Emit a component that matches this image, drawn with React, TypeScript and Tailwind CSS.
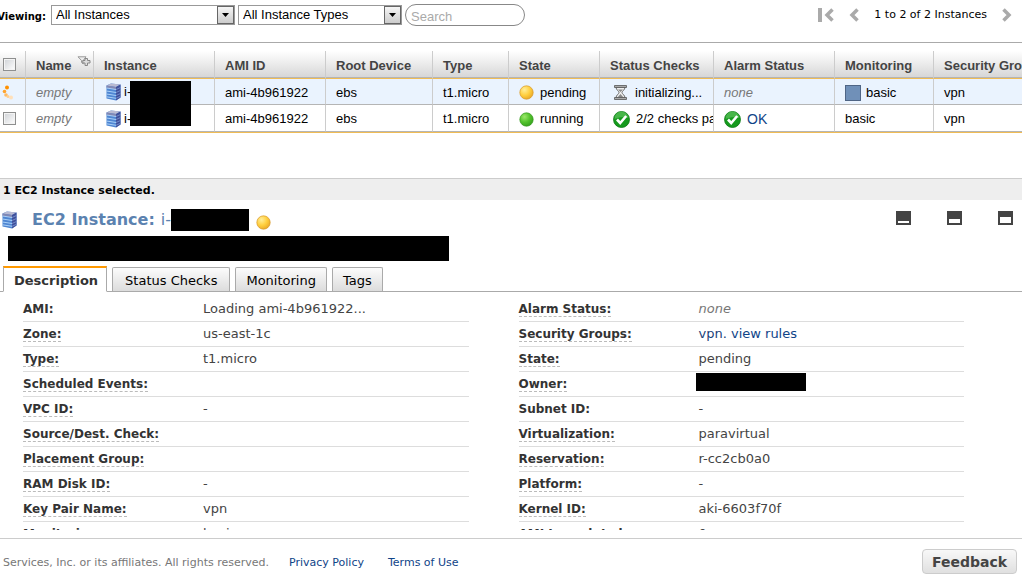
import type { ReactNode } from "react";

const columns = [
  { label: "Name", width: "w-[68px]" },
  { label: "Instance", width: "w-[121px]" },
  { label: "AMI ID", width: "w-[111px]" },
  { label: "Root Device", width: "w-[107px]" },
  { label: "Type", width: "w-[76px]" },
  { label: "State", width: "w-[91px]" },
  { label: "Status Checks", width: "w-[114px]" },
  { label: "Alarm Status", width: "w-[121px]" },
  { label: "Monitoring", width: "w-[99px]" },
  { label: "Security Groups", width: "" },
];

type Detail = { label: string; value?: ReactNode; hint?: boolean };

const leftDetails: Detail[] = [
  { label: "AMI:", value: "Loading ami-4b961922..." },
  { label: "Zone:", value: "us-east-1c", hint: true },
  { label: "Type:", value: "t1.micro", hint: true },
  { label: "Scheduled Events:", hint: true },
  { label: "VPC ID:", value: "-", hint: true },
  { label: "Source/Dest. Check:", hint: true },
  { label: "Placement Group:", hint: true },
  { label: "RAM Disk ID:", value: "-", hint: true },
  { label: "Key Pair Name:", value: "vpn", hint: true },
  { label: "Monitoring:", value: "basic", hint: true },
];

const rightDetails: Detail[] = [
  { label: "Alarm Status:", value: <i className="text-[#777]">none</i>, hint: true },
  {
    label: "Security Groups:",
    value: (
      <>
        <a href="#vpn" className="text-[#1b3f7a]">vpn.</a>{" "}
        <a href="#rules" className="text-[#0f4488]">view rules</a>
      </>
    ),
    hint: true,
  },
  { label: "State:", value: "pending", hint: true },
  { label: "Owner:", value: <span className="-mt-[3px] -ml-[3px] block h-[18px] w-[110px] bg-black" />, hint: true },
  { label: "Subnet ID:", value: "-" },
  { label: "Virtualization:", value: "paravirtual", hint: true },
  { label: "Reservation:", value: "r-cc2cb0a0", hint: true },
  { label: "Platform:", value: "-", hint: true },
  { label: "Kernel ID:", value: "aki-6603f70f", hint: true },
  { label: "AMI Launch Index:", value: "0", hint: true },
];

function ServerIcon() {
  return (
    <svg width="15" height="18" viewBox="0 0 15 18" className="shrink-0">
      <path d="M.5 2.500 5 .5l9.500 1v13L10 17.500.5 15.500z" fill="#4f86d2" />
      <path d="M.5 2.500 5 .5l9.500 1-4.500 2.500z" fill="#b9bad2" />
      <path d="m10 4 4.500-2.500v13L10 17.500z" fill="#3f4f9a" />
      <path d="M.5 2.500 10 4v2.500L.5 5z" fill="#8288b4" />
      <path d="M.5 5 10 6.500M.5 8 10 9.500M.5 11 10 12.500M.5 13.800 10 15.300" stroke="#a9d0f7" />
      <path d="m10 6.500 4.500-2M10 9.500l4.500-2M10 12.500l4.500-2M10 15.300l4.500-2" stroke="#7f9bd6" strokeWidth=".8" />
    </svg>
  );
}

function StateDot({ color }: { color: "yellow" | "green" }) {
  const yellow = color === "yellow";
  return (
    <svg width="15" height="15" viewBox="0 0 15 15" className="shrink-0">
      <defs>
        <radialGradient id={"dot-" + color} cx=".35" cy=".3" r=".75">
          <stop offset="0" stopColor={yellow ? "#ffee9a" : "#9be86a"} />
          <stop offset=".55" stopColor={yellow ? "#ffcf3f" : "#52c22c"} />
          <stop offset="1" stopColor={yellow ? "#e8a828" : "#36a01e"} />
        </radialGradient>
      </defs>
      <circle cx="7.500" cy="7.500" r="6.700" fill={"url(#dot-" + color + ")"} stroke={yellow ? "#d99a2b" : "#379a20"} strokeWidth=".7" />
    </svg>
  );
}

function CheckIcon() {
  return (
    <svg width="17" height="17" viewBox="0 0 17 17" className="shrink-0">
      <circle cx="8.500" cy="8.500" r="8" fill="#159a1d" stroke="#0b7a14" strokeWidth=".8" />
      <path d="M1.500 8a7 7 0 0 1 14-1C11 5.500 6 6 1.500 8z" fill="#5cc25c" opacity=".7" />
      <path d="m4 8.500 3.200 3.500L13.200 5" fill="none" stroke="#fff" strokeWidth="2.600" />
    </svg>
  );
}

function HourglassIcon() {
  return (
    <svg width="13" height="15" viewBox="0 0 13 15" className="shrink-0">
      <path d="M2 2h9c0 3-3 4-3 5.500S11 10 11 13H2c0-3 3-4 3-5.500S2 5 2 2z" fill="#eee" stroke="#666" />
      <path d="M4 4.500h5L6.500 7zM3 13l3.500-4L10 13z" fill="#888" />
      <path d="M.5.500h12v2H.5zM.5 12.500h12v2H.5z" fill="#aaa" stroke="#555" strokeWidth=".8" />
    </svg>
  );
}

function SpinnerIcon() {
  return (
    <svg width="14" height="16" viewBox="0 0 14 16">
      <circle cx="7" cy="3.500" r="2" fill="#ff9000" />
      <circle cx="4.500" cy="7.500" r="1.800" fill="#ffa42e" />
      <circle cx="6" cy="11" r="1.800" fill="#ffba62" />
      <circle cx="8" cy="12.500" r="1.500" fill="#ffcf90" />
      <circle cx="11" cy="13.500" r="2" fill="#ffe0ba" />
    </svg>
  );
}

function FilterIcon() {
  return (
    <svg width="14" height="10" viewBox="0 0 14 10">
      <path d="M1 .8h8L6.200 4.500V8L4.500 6.500v-2z" fill="#eee" stroke="#999" />
      <path d="M8 2.500h2.500V4.500h2.500V7h-2.500v2.500H8V7H5.800V4.500H8z" fill="#ddd" stroke="#888" />
    </svg>
  );
}

function Chevron({ direction, bar }: { direction: "left" | "right"; bar?: boolean }) {
  return (
    <button type="button" aria-label={bar ? "First page" : direction === "left" ? "Previous page" : "Next page"}>
      <svg width={bar ? 16 : 10} height="14" viewBox={bar ? "-6 0 16 14" : "0 0 10 14"} className="block">
        {bar && <path d="M-6 0h4v14h-4z" fill="#aaa" />}
        <path d={direction === "left" ? "M8.500 1.500 3 7l5.500 5.500" : "M1.500 1.500 7 7l-5.500 5.500"} fill="none" stroke="#aaa" strokeWidth="3.500" />
      </svg>
    </button>
  );
}

function Picker({ label, option, width }: { label: string; option: string; width: string }) {
  return (
    <div className={"relative h-5 " + width}>
      <select aria-label={label} className="block h-5 w-full appearance-none border border-[#999] bg-white pl-1 text-[13px] leading-[18px] text-black">
        <option>{option}</option>
      </select>
      <span className="pointer-events-none absolute top-px right-px flex h-[18px] w-[17px] items-center justify-center border border-[#666] bg-gradient-to-b from-[#f5f5f5] to-[#ccc]">
        <svg width="7" height="4" viewBox="0 0 7 4"><path d="M0 0h7L3.500 4z" /></svg>
      </span>
    </div>
  );
}

function Checkbox({ label }: { label: string }) {
  return (
    <input
      type="checkbox"
      aria-label={label}
      className="block size-[13px] appearance-none border border-[#8e8f8f] bg-gradient-to-br from-[#cfd2d6] to-white shadow-[inset_0_0_0_1px_#f4f4f4]"
    />
  );
}

function WindowButton({ label, top }: { label: string; top: number }) {
  return (
    <button type="button" aria-label={label}>
      <svg width="15" height="14" className="block">
        <path d="M0 0h15v14H0z" fill="#444" />
        <rect x="2" y={top} width="11" height={12 - top} fill="#fff" />
      </svg>
    </button>
  );
}

function Cell({ children }: { children?: ReactNode }) {
  return (
    <td className="overflow-hidden border-r border-b border-r-[#ccc] border-b-[#b5b5b5] pl-2.5 whitespace-nowrap last:border-r-0">
      <div className="flex h-[25px] items-center pt-0.5">{children}</div>
    </td>
  );
}

function DetailList({ items }: { items: Detail[] }) {
  return (
    <dl>
      {items.map((item) => (
        <div key={item.label} className="flex h-[25px] items-start border-b border-[#ddd] pt-1">
          <dt className="w-[180px] text-xs font-bold text-[#333]">
            <span className={item.hint ? "border-b border-dashed border-[#bbb]" : ""}>{item.label}</span>
          </dt>
          <dd className="text-[13px] leading-4 text-[#444]">{item.value}</dd>
        </div>
      ))}
    </dl>
  );
}

function InstanceTable() {
  return (
    <table className="w-full table-fixed border-separate border-spacing-0 text-[13px] text-black">
      <thead>
        <tr className="bg-gradient-to-b from-white to-[#d4d4d4] text-left text-[#444]">
          <th className="h-7 w-[26px] border-r border-b border-r-[#ccc] border-b-[#f0bc55] pl-[3px] shadow-[inset_0_-1px_0_#b5b5b5]">
            <Checkbox label="Select all instances" />
          </th>
          {columns.map((column) => (
            <th
              key={column.label}
              className={
                "h-7 overflow-hidden border-r border-b border-r-[#ccc] border-b-[#f0bc55] pt-0.5 pl-2.5 font-bold whitespace-nowrap shadow-[inset_0_-1px_0_#b5b5b5] last:border-r-0 " +
                column.width
              }
            >
              <div className="flex gap-1.5">
                {column.label}
                {column.label === "Name" && <FilterIcon />}
              </div>
            </th>
          ))}
        </tr>
      </thead>
      <tbody>
        <tr className="h-[26px] bg-[#eaf3fe]">
          <td className="border-r border-b border-r-[#ccc] border-b-[#b5b5b5]"><SpinnerIcon /></td>
          <Cell><i className="text-[#777]">empty</i></Cell>
          <td className="relative border-r border-b border-r-[#ccc] border-b-[#b5b5b5] pl-3">
            <div className="flex items-center gap-[3px] pt-px"><ServerIcon />i-</div>
            <span className="absolute top-0.5 left-9 z-10 h-[45px] w-[61px] bg-black" />
          </td>
          <Cell>ami-4b961922</Cell>
          <Cell>ebs</Cell>
          <Cell>t1.micro</Cell>
          <Cell><span className="flex items-center gap-1.5"><StateDot color="yellow" />pending</span></Cell>
          <Cell><span className="flex items-center gap-2 pl-1"><HourglassIcon />initializing...</span></Cell>
          <Cell><i className="text-[#777]">none</i></Cell>
          <Cell>
            <span className="flex items-center gap-[5px]">
              <span className="size-4 border border-[#4f6585] bg-[#7090b8]" />
              basic
            </span>
          </Cell>
          <Cell>vpn</Cell>
        </tr>
        <tr className="h-[27px]">
          <td className="border-r border-b border-r-[#ccc] border-b-[#b5b5b5] pl-[3px]"><Checkbox label="Select instance" /></td>
          <Cell><i className="text-[#777]">empty</i></Cell>
          <td className="border-r border-b border-r-[#ccc] border-b-[#b5b5b5] pl-3">
            <div className="flex items-center gap-[3px] pt-px"><ServerIcon />i-</div>
          </td>
          <Cell>ami-4b961922</Cell>
          <Cell>ebs</Cell>
          <Cell>t1.micro</Cell>
          <Cell><span className="flex items-center gap-1.5"><StateDot color="green" />running</span></Cell>
          <Cell><span className="flex items-center gap-1.5 pl-[3px]"><CheckIcon />2/2 checks passed</span></Cell>
          <Cell>
            <a href="#alarms" className="flex items-center gap-1.5 text-sm text-[#0f4488]"><CheckIcon />OK</a>
          </Cell>
          <Cell>basic</Cell>
          <Cell>vpn</Cell>
        </tr>
      </tbody>
    </table>
  );
}

const tabClass =
  "h-6 rounded-t-xs border border-b-0 border-[#aaa] bg-gradient-to-b from-[#fcfcfc] to-[#dcdcdc] pt-0.5 text-[13px] text-black";

export default function App() {
  return (
    <div className="flex h-screen flex-col overflow-hidden bg-white font-['DejaVu_Sans',sans-serif]">
      <div className="flex h-[43px] shrink-0 items-start justify-between border-b border-[#aaa] pt-1 pr-2.5">
        <div className="flex items-center font-['Liberation_Sans',sans-serif]">
          <div className="mr-[5px] flex w-[46px] justify-end pt-0.5 font-['DejaVu_Sans',sans-serif] text-[10px] font-bold">Viewing:</div>
          <div className="flex items-center gap-[3px]">
            <Picker label="Instance filter" option="All Instances" width="w-[184px]" />
            <Picker label="Instance type filter" option="All Instance Types" width="w-[164px]" />
            <input
              type="text"
              aria-label="Search"
              placeholder="Search"
              className="h-[22px] w-[120px] rounded-full border border-[#888] pt-0.5 pl-[5px] text-[13px] placeholder:text-[#aaa]"
            />
          </div>
        </div>
        <div className="flex h-[22px] items-center gap-[15px] text-[11px]">
          <Chevron direction="left" bar />
          <Chevron direction="left" />
          <span>1 to 2 of 2 Instances</span>
          <Chevron direction="right" />
        </div>
      </div>

      <div className="mt-2 mb-[45px] shrink-0 border-b border-[#f0bc55] font-['Liberation_Sans',sans-serif]">
        <InstanceTable />
      </div>

      <div className="h-[22px] shrink-0 border-t border-[#ccc] bg-[#eee] pt-[3px] pl-[3px] text-[11px] leading-[18px] font-bold">
        1 EC2 Instance selected.
      </div>

      <div className="flex h-9 shrink-0 items-center justify-between pr-[9px] pl-0.5">
        <h1 className="flex items-center pt-1 text-base text-[#5b82b0]">
          <ServerIcon />
          <span className="mr-1.5 ml-[15px] font-bold">EC2 Instance:</span>
          i-
          <span className="mr-[7px] h-[22px] w-[78px] bg-black" />
          <span className="mt-1"><StateDot color="yellow" /></span>
        </h1>
        <div className="flex gap-9">
          <WindowButton label="Minimize panel" top={10} />
          <WindowButton label="Half panel" top={8} />
          <WindowButton label="Maximize panel" top={6} />
        </div>
      </div>
      <div className="ml-2 h-[25px] w-[441px] shrink-0 bg-black" />

      <div className="flex h-[31px] shrink-0 items-end gap-[5px] border-b border-[#aaa] pl-[3px]">
        <button type="button" className="-mb-px h-[26px] border border-t-2 border-[#aaa] border-t-[#ff9900] border-b-white bg-white pt-0.5 pr-2 pl-2.5 text-[13px] font-bold text-[#333]">
          Description
        </button>
        <button type="button" className={tabClass + " px-3"}>Status Checks</button>
        <button type="button" className={tabClass + " px-2.5"}>Monitoring</button>
        <button type="button" className={tabClass + " px-2.5"}>Tags</button>
      </div>

      <div className="grid min-h-0 flex-1 grid-cols-2 gap-[50px] overflow-hidden pt-[5px] pr-[58px] pl-[23px]">
        <DetailList items={leftDetails} />
        <DetailList items={rightDetails} />
      </div>

      <div className="mt-2 flex h-[42px] shrink-0 items-center justify-between border-t border-[#ccc] pt-1 pr-[5px] text-[11px] text-[#777]">
        <div className="flex pt-1 whitespace-nowrap">
          <span className="flex w-[269px] justify-end">Services, Inc. or its affiliates. All rights reserved.</span>
          <a href="#privacy" className="ml-5 text-[#0f4488]">Privacy Policy</a>
          <a href="#terms" className="ml-6 text-[#0f4488]">Terms of Use</a>
        </div>
        <button type="button" className="h-[25px] rounded-[4px] border border-[#ccc] bg-gradient-to-b from-[#f8f8f8] to-[#e0e0e0] px-[9px] text-sm leading-5 font-bold text-[#444]">
          Feedback
        </button>
      </div>
    </div>
  );
}
